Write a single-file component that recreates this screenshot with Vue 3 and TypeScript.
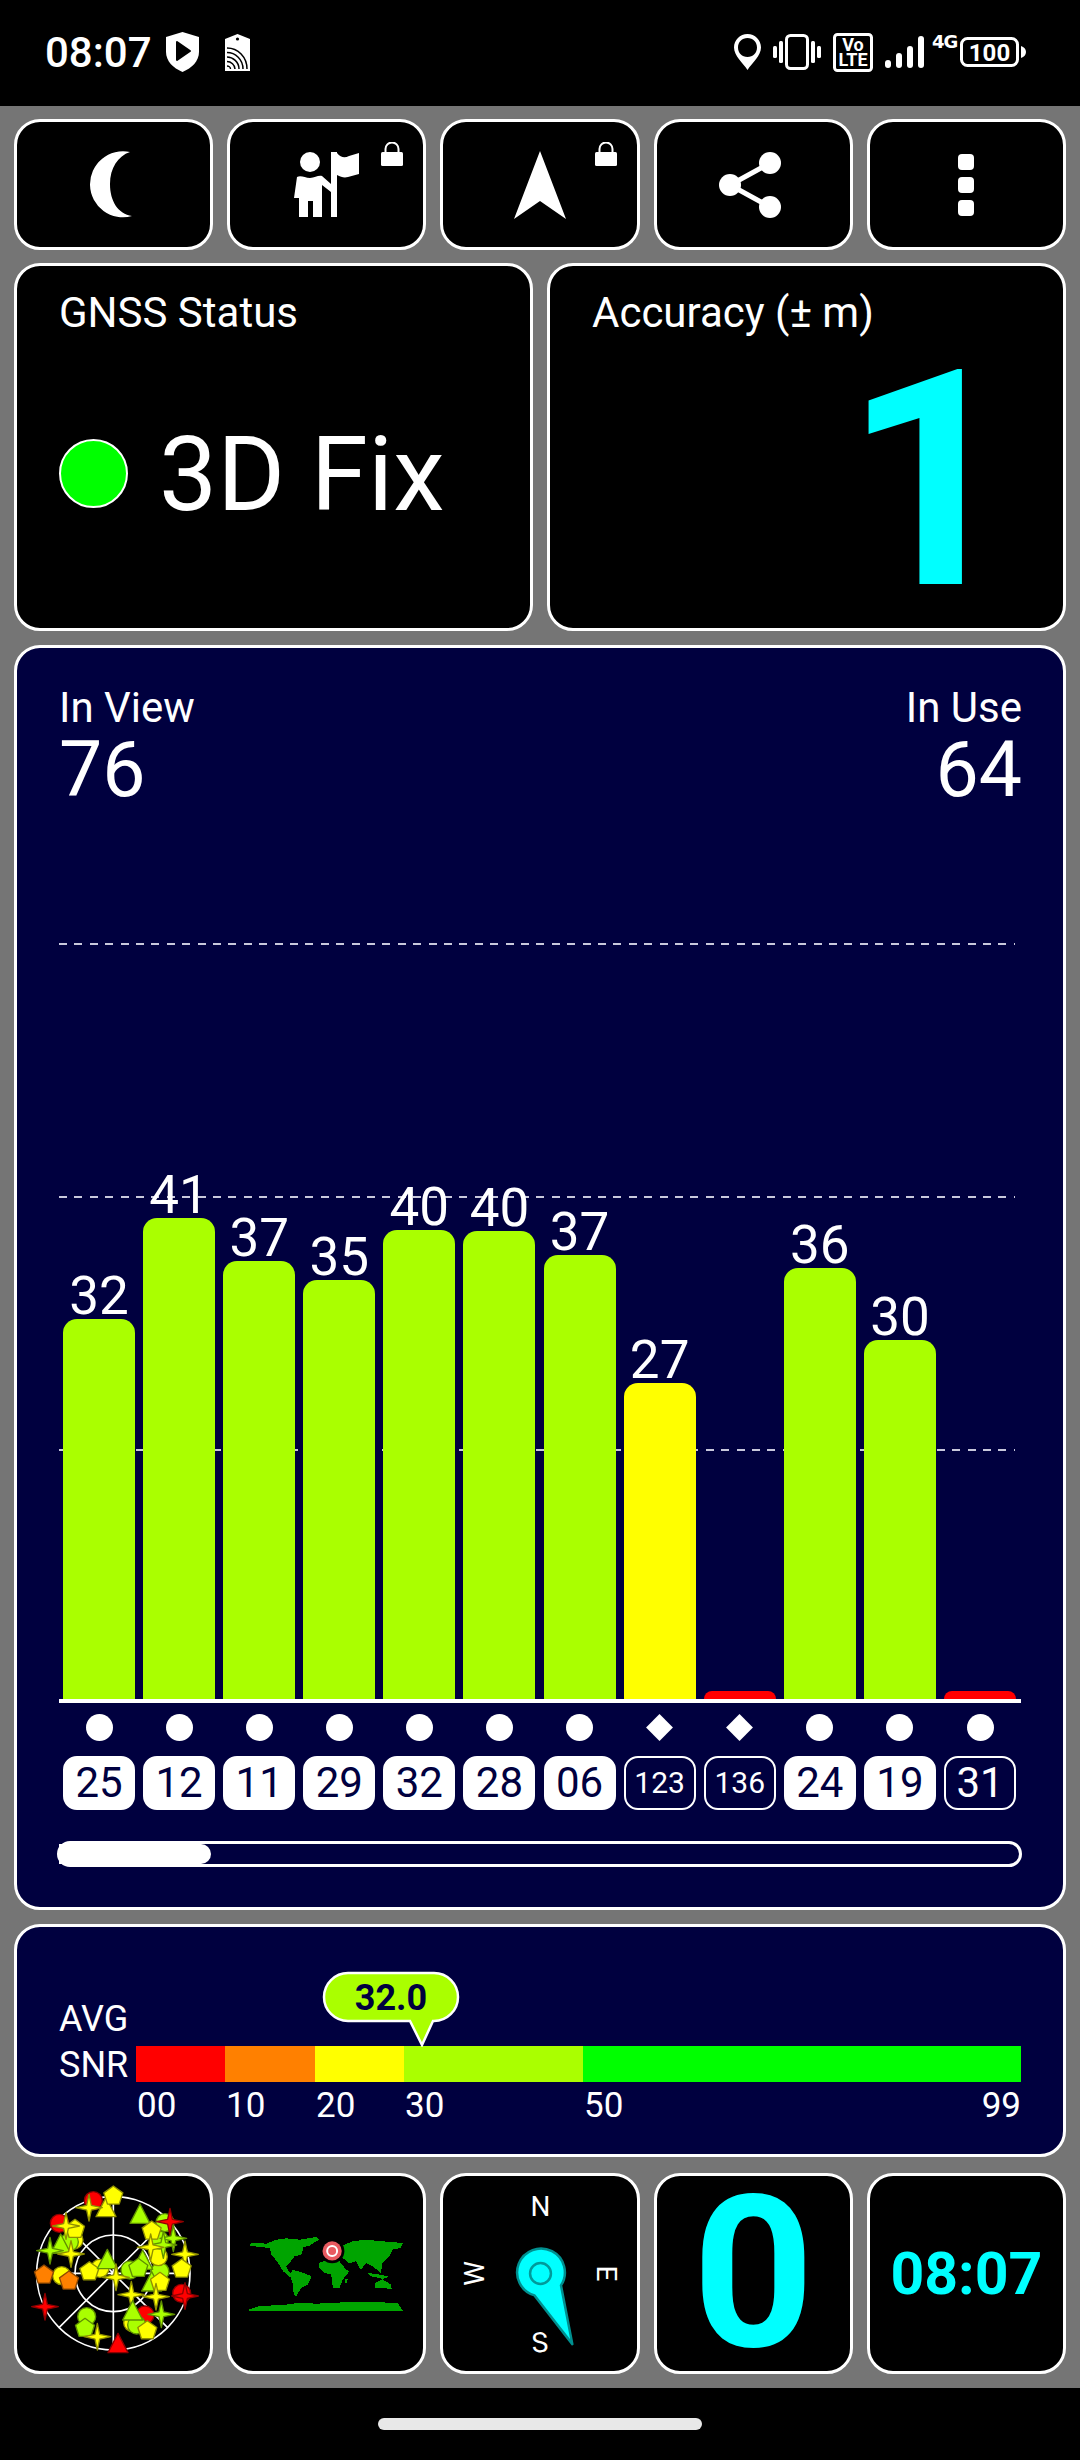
<script setup lang="ts">
interface Sat { h: number; v?: number; color: string; dot: 'c' | 'd'; id: string; used: boolean; small?: boolean }
const LIME = '#aaff00', YEL = '#ffff00', RED = '#ff0000'
const sats: Sat[] = [
  { h: 380, v: 32, color: LIME, dot: 'c', id: '25', used: true },
  { h: 481, v: 41, color: LIME, dot: 'c', id: '12', used: true },
  { h: 438, v: 37, color: LIME, dot: 'c', id: '11', used: true },
  { h: 419, v: 35, color: LIME, dot: 'c', id: '29', used: true },
  { h: 469, v: 40, color: LIME, dot: 'c', id: '32', used: true },
  { h: 468, v: 40, color: LIME, dot: 'c', id: '28', used: true },
  { h: 444, v: 37, color: LIME, dot: 'c', id: '06', used: true },
  { h: 316, v: 27, color: YEL, dot: 'd', id: '123', used: false, small: true },
  { h: 8, color: RED, dot: 'd', id: '136', used: false, small: true },
  { h: 431, v: 36, color: LIME, dot: 'c', id: '24', used: true },
  { h: 359, v: 30, color: LIME, dot: 'c', id: '19', used: true },
  { h: 8, color: RED, dot: 'c', id: '31', used: false },
]
const gridTops = [137, 390, 643]

const scaleSegs = [
  { c: '#ff0000', t: '00' }, { c: '#ff8000', t: '10' }, { c: '#ffff00', t: '20' }, { c: '#aaff00', t: '30' }, { c: '#00ff00', t: '50' },
]

type Kind = 'circle' | 'pent' | 'tri' | 'star'
const strokeOf: Record<string, string> = { '#ffff00': '#8f8f00', '#aaff00': '#5f8f00', '#ff0000': '#8f0000', '#ff8000': '#8f4800' }
const Y = '#ffff00', L = '#aaff00', R = '#ff0000', O = '#ff8000'
const raw: [Kind, number, number, string][] = [
  ['circle', 280, 122, R], ['circle', 178, 190, R], ['circle', 495, 188, L], ['circle', 222, 240, Y], ['circle', 208, 246, L],
  ['circle', 185, 347, Y], ['circle', 260, 470, L], ['circle', 300, 325, Y], ['circle', 480, 335, L], ['circle', 390, 330, L],
  ['circle', 435, 465, R], ['circle', 398, 488, Y], ['circle', 410, 495, L], ['circle', 475, 290, Y], ['circle', 478, 240, L],
  ['tri', 318, 142, Y], ['pent', 340, 108, Y], ['star', 267, 143, Y], ['tri', 420, 162, L], ['pent', 225, 208, Y],
  ['star', 198, 198, Y], ['star', 510, 185, R], ['pent', 455, 213, Y], ['tri', 182, 252, L], ['star', 150, 272, L],
  ['star', 213, 282, Y], ['star', 520, 235, L], ['star', 490, 255, L], ['star', 452, 262, Y], ['star', 555, 283, Y],
  ['pent', 132, 345, O], ['pent', 207, 363, O], ['pent', 268, 335, Y], ['tri', 322, 298, L], ['tri', 428, 300, L],
  ['pent', 415, 325, L], ['pent', 545, 327, Y], ['tri', 455, 365, L], ['pent', 480, 367, Y], ['star', 348, 352, Y],
  ['star', 394, 404, Y], ['star', 468, 410, Y], ['star', 484, 463, L], ['tri', 398, 452, L], ['pent', 255, 505, L],
  ['pent', 442, 512, Y], ['star', 292, 530, Y], ['tri', 354, 550, R], ['circle', 545, 400, R], ['star', 555, 408, R], ['star', 135, 440, R],
]
function pts(kind: Kind, x: number, y: number): string {
  const p: string[] = []
  if (kind === 'pent') {
    for (let i = 0; i < 5; i++) {
      const a = -Math.PI / 2 + (i * 2 * Math.PI) / 5
      p.push(`${(x + 30 * Math.cos(a)).toFixed(1)},${(y + 30 * Math.sin(a)).toFixed(1)}`)
    }
  } else if (kind === 'tri') {
    p.push(`${x},${y - 30}`, `${x + 30},${y + 28}`, `${x - 30},${y + 28}`)
  } else {
    for (let i = 0; i < 8; i++) {
      const a = -Math.PI / 2 + (i * Math.PI) / 4
      const r = i % 2 === 0 ? 40 : 10
      p.push(`${(x + r * Math.cos(a)).toFixed(1)},${(y + r * Math.sin(a)).toFixed(1)}`)
    }
  }
  return p.join(' ')
}
const skyShapes = raw.map(([kind, x, y, c]) => ({ kind, x, y, c, s: strokeOf[c], points: kind === 'circle' ? '' : pts(kind, x, y) }))

const land = [
  '748,252 770,250 800,252 830,240 860,236 900,240 950,232 958,240 930,258 912,262 905,285 885,290 870,310 860,320 866,335 880,350 870,352 850,335 835,310 815,285 810,265 780,262 750,258',
  '878,330 910,340 936,350 925,375 905,385 890,410 882,405 880,375 872,350',
  '960,310 985,300 1020,305 1040,330 1050,335 1030,360 1020,385 1000,385 995,345 975,340 958,325',
  '985,262 1035,255 1060,245 1100,240 1150,245 1212,250 1205,265 1180,270 1170,290 1150,310 1145,340 1120,320 1100,310 1085,332 1070,305 1050,312 1030,295 1000,300 975,300',
  '1128,370 1150,360 1175,375 1178,390 1150,385 1128,385',
  '1038,360 1045,358 1042,372 1036,372',
  '1105,340 1140,345 1170,352 1150,358 1115,350',
  '748,450 780,440 850,437 900,430 950,433 1050,428 1195,430 1212,456 748,456',
]
</script>

<template>
  <div class="screen">
    <header class="status">
      <span class="clock">08:07</span>
      <svg class="s-shield" width="33" height="40" viewBox="0 0 33 40">
        <path fill="#fff" d="M16.5 0 33 5v15c0 9-7 16-16.500 20C7 36 0 29 0 20V5Z" />
        <path fill="#000" d="M11 10l13 9-13 9Z" stroke="#000" stroke-width="2" stroke-linejoin="round" />
      </svg>
      <svg class="s-tag" width="25" height="37" viewBox="0 0 25 37">
        <path fill="#fff" d="M12.500 0 25 5v32H0V5Z" />
        <circle cx="12.500" cy="5" r="1.600" fill="#000" />
        <g fill="none" stroke="#000" stroke-width="1.500">
          <path d="M2 14c11 0 20 9 20 21" /><path d="M2 18.500c8.500 0 16 7 16 16.500" /><path d="M2 23c6 0 12 5 12 12" /><path d="M2 27.500c4 0 8 3.500 8 7.500" /><path d="M2 32c1.500 0 3.500 1 3.500 3" />
        </g>
      </svg>
      <div class="s-right">
        <svg width="27" height="36" viewBox="0 0 27 36">
          <path fill="#fff" fill-rule="evenodd" d="M13.500 0C21 0 27 6 27 13.500 27 22 18 29 13.500 36 9 29 0 22 0 13.500 0 6 6 0 13.500 0ZM13.500 4C8 4 4 8 4 13.500S8 23 13.500 23 23 19 23 13.500 19 4 13.500 4Z" />
        </svg>
        <svg width="48" height="36" viewBox="0 0 48 36">
          <rect x="13.500" y="1.500" width="21" height="33" rx="4" fill="none" stroke="#fff" stroke-width="3" />
          <rect x="0" y="12" width="4" height="12" rx="1.500" fill="#fff" /><rect x="6" y="7" width="4" height="22" rx="1.500" fill="#fff" />
          <rect x="38" y="7" width="4" height="22" rx="1.500" fill="#fff" /><rect x="44" y="12" width="4" height="12" rx="1.500" fill="#fff" />
        </svg>
        <svg width="40" height="39" viewBox="0 0 40 39">
          <rect x="1.500" y="1.500" width="37" height="36" rx="3" fill="none" stroke="#fff" stroke-width="3" />
          <text x="20" y="18" class="t-volte" text-anchor="middle">Vo</text>
          <text x="20" y="33" class="t-volte" text-anchor="middle">LTE</text>
        </svg>
        <svg width="39" height="32" viewBox="0 0 39 32">
          <rect x="0" y="24" width="6" height="8" rx="3" fill="#fff" /><rect x="11" y="17" width="6" height="15" rx="3" fill="#fff" />
          <rect x="22" y="10" width="6" height="22" rx="3" fill="#fff" /><rect x="33" y="0" width="6" height="32" rx="3" fill="#fff" />
        </svg>
        <span class="s-4g">4G</span>
        <svg class="s-batt" width="66" height="30" viewBox="0 0 66 30">
          <rect x="1.500" y="1.500" width="56" height="27" rx="6" fill="none" stroke="#fff" stroke-width="3" />
          <text x="29.500" y="24" class="t-batt" text-anchor="middle">100</text>
          <path d="M61 9c3 1 5 3 5 6s-2 5-5 6Z" fill="#fff" />
        </svg>
      </div>
    </header>

    <main class="content">
      <section class="row tools">
        <div class="card tool">
          <svg class="moon" width="46" height="68" viewBox="0 0 46 68"><path fill="#fff" d="M42 1A33 33 0 1 0 44 65C30 63 22 50 22 33 22 17 30 5 42 1Z" /></svg>
        </div>
        <div class="card tool">
          <svg width="66" height="66" viewBox="0 0 66 66">
            <circle cx="16" cy="10" r="10" fill="#fff" />
            <path fill="#fff" d="M3 25c4-2 8 1 13 1s8-3 12-2l9 8v8l-9-7v32H19V49h-5v16H5V46H0Z" />
            <path fill="#fff" d="M37 0h6v65h-6ZM43 1c4 5 8 5 12 3l10-3v21l-11 3c-4 1-7 0-11-2Z" />
          </svg>
          <svg class="lock" width="22" height="24" viewBox="0 0 22 24"><path d="M4.500 12V7a6.500 6.500 0 0 1 13 0v5" fill="none" stroke="#fff" stroke-width="2" /><rect y="10" width="22" height="14" rx="1.500" fill="#fff" /></svg>
        </div>
        <div class="card tool">
          <svg width="52" height="68" viewBox="0 0 52 68"><path fill="#fff" d="M26 0 52 68 26 50 0 68Z" /></svg>
          <svg class="lock" width="22" height="24" viewBox="0 0 22 24"><path d="M4.500 12V7a6.500 6.500 0 0 1 13 0v5" fill="none" stroke="#fff" stroke-width="2" /><rect y="10" width="22" height="14" rx="1.500" fill="#fff" /></svg>
        </div>
        <div class="card tool">
          <svg class="share" width="62" height="66" viewBox="0 0 62 66">
            <path d="M51 11 11 33l40 22" fill="none" stroke="#fff" stroke-width="5" />
            <circle cx="51" cy="11" r="11" fill="#fff" /><circle cx="11" cy="33" r="11" fill="#fff" /><circle cx="51" cy="55" r="11" fill="#fff" />
          </svg>
        </div>
        <div class="card tool">
          <div class="vdots"><i></i><i></i><i></i></div>
        </div>
      </section>

      <section class="row two">
        <div class="card info">
          <div class="label">GNSS Status</div>
          <div class="fix"><span class="led"></span><span class="fix-t">3D Fix</span></div>
        </div>
        <div class="card info acc">
          <div class="label">Accuracy (± m)</div>
          <div class="acc-v">1</div>
        </div>
      </section>

      <section class="card navy sats">
        <div class="head">
          <div><div class="label">In View</div><div class="num">76</div></div>
          <div class="right"><div class="label">In Use</div><div class="num">64</div></div>
        </div>
        <div class="chart">
          <i v-for="t in gridTops" :key="t" class="gridline" :style="{ top: t + 'px' }"></i>
          <div class="col" v-for="s in sats" :key="s.id">
            <span v-if="s.v" class="val">{{ s.v }}</span>
            <div class="bar" :style="{ height: s.h + 'px', background: s.color }"></div>
          </div>
        </div>
        <div class="axis"></div>
        <div class="dots">
          <div v-for="s in sats" :key="s.id" class="dot-cell"><i :class="s.dot === 'c' ? 'circ' : 'diam'"></i></div>
        </div>
        <div class="ids">
          <span v-for="s in sats" :key="s.id" class="id" :class="{ used: s.used, small: s.small }">{{ s.id }}</span>
        </div>
        <div class="scroll"><i></i></div>
      </section>

      <section class="card navy avg">
        <div class="avg-l"><div>AVG</div><div>SNR</div></div>
        <div class="avg-r">
          <svg class="bubble" width="140" height="76" viewBox="0 0 140 76">
            <path d="M26 2H112a24 24 0 0 1 0 48H111L100 74 88 50H26a24 24 0 0 1 0-48Z" fill="#aaff00" stroke="#fff" stroke-width="2.500" />
            <text x="69" y="39" text-anchor="middle" class="t-bubble">32.0</text>
          </svg>
          <div class="scale">
            <div v-for="s in scaleSegs" :key="s.t" class="seg" :style="{ background: s.c }"></div>
            <span v-for="s in scaleSegs.slice(0, 4)" :key="s.t">{{ s.t }}</span>
            <span class="last"><span>50</span><span>99</span></span>
          </div>
        </div>
      </section>

      <section class="row tiles">
        <div class="card tile">
          <svg width="193" height="193" viewBox="51 51 579 579">
            <g fill="none" stroke="#fff" stroke-width="5">
              <circle cx="340" cy="340" r="230" /><circle cx="340" cy="340" r="115" />
              <path d="M340 110V570M110 340H570M177 503 503 177M177 177 503 503" />
            </g>
            <template v-for="(s, i) in skyShapes" :key="i">
              <circle v-if="s.kind === 'circle'" :cx="s.x" :cy="s.y" r="27" :fill="s.c" :stroke="s.s" stroke-width="4" />
              <polygon v-else :points="s.points" :fill="s.c" :stroke="s.s" stroke-width="4" stroke-linejoin="round" />
            </template>
          </svg>
        </div>
        <div class="card tile">
          <svg width="193" height="193" viewBox="690 51 582 582">
            <polygon v-for="(p, i) in land" :key="i" :points="p" fill="#00a400" shape-rendering="crispEdges" />
            <circle cx="998" cy="274" r="37" fill="#000" />
            <circle cx="998" cy="274" r="29" fill="#e85a60" />
            <circle cx="998" cy="274" r="15" fill="none" stroke="#fff" stroke-width="6" />
          </svg>
        </div>
        <div class="card tile">
          <svg width="193" height="194" viewBox="0 0 194 195">
            <text x="97" y="39" text-anchor="middle" class="t-dir">N</text>
            <text x="0" y="0" text-anchor="middle" class="t-dir" transform="translate(40 97) rotate(-90)">W</text>
            <text x="0" y="0" text-anchor="middle" class="t-dir" transform="translate(154 97) rotate(90)">E</text>
            <text x="0" y="0" text-anchor="middle" class="t-dir" transform="translate(97 176) rotate(-4)">S</text>
            <path d="M91 119 129 168 117.600 109A24 24 0 1 0 91 119Z" fill="#00ffff" stroke="#008f8f" stroke-width="2.500" stroke-linejoin="round" />
            <circle cx="97" cy="97" r="10.500" fill="none" stroke="#009a9a" stroke-width="2.500" />
          </svg>
        </div>
        <div class="card tile zero"><span class="zero-t">0</span></div>
        <div class="card tile time">08:07</div>
      </section>
    </main>

    <footer class="nav"><i></i></footer>
  </div>
</template>

<style scoped>
.screen { width: 1080px; height: 2460px; display: flex; flex-direction: column; background: #757575; font-family: Roboto, "Noto Sans", sans-serif; color: #fff; overflow: hidden; }
.status { height: 106px; flex: none; background: #000; display: flex; align-items: center; padding-left: 45px; box-sizing: border-box; }
.clock { font-size: 42px; line-height: 48px; font-weight: 500; }
.s-shield { margin-left: 14px; margin-top: -2px; }
.s-tag { margin-left: 26px; margin-top: -1px; }
.s-right { margin-left: auto; margin-right: 54px; display: flex; align-items: center; gap: 12px; margin-top: -2px; }
.t-volte { font: 700 18px Roboto, sans-serif; fill: #fff; }
.t-batt { font: 700 24px Roboto, sans-serif; fill: #fff; }
.t-dir { font: 400 28px Roboto, sans-serif; fill: #fff; }
.s-4g { font: 700 18px/20px "DejaVu Sans", sans-serif; width: 23px; margin-left: -4px; margin-top: -20px; letter-spacing: -1px; }
.s-batt { margin-left: -7px; }

.content { flex: 1; display: flex; flex-direction: column; padding: 13px 14px 0; }
.card { box-sizing: border-box; border: 3px solid #fff; border-radius: 26px; background: #000; }
.row { display: flex; gap: 14px; }
.tools { height: 131px; }
.tool { flex: 1 1 0; display: flex; align-items: center; justify-content: center; position: relative; }
.moon { margin-left: -5px; }
.share { margin-left: -6px; }
.lock { position: absolute; top: 20px; right: 20px; }
.vdots { display: flex; flex-direction: column; gap: 7px; }
.vdots i { width: 16px; height: 16px; border-radius: 4px; background: #fff; display: block; }

.two { height: 368px; margin-top: 13px; }
.info { flex: 1 1 0; padding: 27px 0 0 42px; }
.label { font-size: 42px; line-height: 40px; }
.fix { display: flex; align-items: center; gap: 31px; margin-top: 82px; }
.led { width: 69px; height: 69px; box-sizing: border-box; border-radius: 50%; background: #00ff00; border: 2px solid #fff; margin-bottom: 4px; }
.fix-t { font-size: 103.500px; line-height: 120px; }
.acc { position: relative; }
.acc-v { position: absolute; right: 46px; top: 100px; font-size: 302px; line-height: 230px; font-weight: 700; color: #00ffff; }

.navy { background: #00003f; }
.sats { height: 1265px; margin-top: 14px; padding: 40px 42px 0; display: flex; flex-direction: column; }
.head { display: flex; justify-content: space-between; height: 118px; flex: none; }
.right { text-align: right; margin-right: -1px; }
.num { font-size: 77px; line-height: 72px; margin-top: 6px; }
.chart { height: 893px; flex: none; position: relative; display: flex; gap: 8.1px; padding: 0 4px; align-items: flex-end; }
.gridline { position: absolute; left: 0; width: 956px; height: 2px; background: repeating-linear-gradient(90deg, #c8c8dc 0 8px, transparent 8px 15.400px); }
.col { width: 72px; display: flex; flex-direction: column; align-items: center; position: relative; }
.val { font-size: 53px; line-height: 52px; margin-bottom: -3px; }
.bar { width: 72px; border-radius: 14px 14px 0 0; }
.axis { height: 4px; background: #fff; flex: none; }
.dots { display: flex; gap: 8.1px; padding: 0 4px; margin-top: 11px; }
.dot-cell { width: 72px; height: 27px; display: flex; align-items: center; justify-content: center; }
.circ { width: 27px; height: 27px; border-radius: 50%; background: #fff; display: block; }
.diam { width: 19px; height: 19px; background: #fff; transform: rotate(45deg); display: block; }
.ids { display: flex; gap: 8.1px; padding: 0 4px; margin-top: 15px; }
.id { width: 72px; height: 54px; box-sizing: border-box; border: 2.500px solid #fff; border-radius: 14px; display: flex; align-items: center; justify-content: center; font-size: 42px; line-height: 1; color: #fff; }
.id.used { background: #fff; color: #00003f; }
.id.small { font-size: 30px; }
.scroll { height: 26px; margin: 31px -1px 0 -2px; box-sizing: border-box; border: 3px solid #fff; border-radius: 13px; flex: none; }
.scroll i { display: block; height: 100%; width: 152px; background: #fff; border-radius: 0 10px 10px 0; margin-left: -1px; }

.avg { height: 233px; margin-top: 14px; padding: 69px 42px 0; display: flex; }
.avg-l { width: 77px; font-size: 36px; line-height: 46px; flex: none; }
.avg-r { flex: 1; position: relative; padding-top: 50px; }
.bubble { position: absolute; left: 186px; top: -25px; }
.t-bubble { font: 700 36px Roboto, sans-serif; fill: #00003f; }
.scale { display: grid; grid-template-columns: 89px 90px 89px 179px 1fr; grid-template-rows: 36px auto; font-size: 35px; line-height: 34px; }
.seg { height: 36px; }
.scale > span { padding-top: 7px; padding-left: 1px; }
.last { display: flex; justify-content: space-between; }

.tiles { margin-top: 16px; height: 201px; }
.tile { flex: 1 1 0; display: flex; align-items: center; justify-content: center; }
.zero { color: #00ffff; }
.zero-t { font-size: 212px; line-height: 190px; font-weight: 700; }
.time { font-size: 59px; font-weight: 700; color: #00ffff; }

.nav { height: 72px; flex: none; margin-top: 14px; background: #000; display: flex; justify-content: center; padding-top: 30px; box-sizing: border-box; }
.nav i { width: 324px; height: 12px; border-radius: 6px; background: #e8e8e8; display: block; }
</style>

<style>
body { margin: 0; background: #000; }
</style>
